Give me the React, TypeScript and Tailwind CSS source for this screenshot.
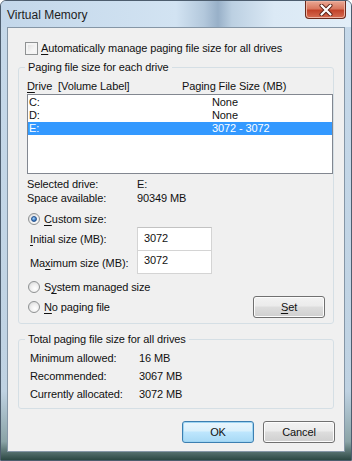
import React from "react";

const Radio = ({ checked = false }: { checked?: boolean }) => (
  <span className="relative flex h-[12px] w-[12px] shrink-0 items-center justify-center rounded-full border border-[#8f9293] bg-[radial-gradient(circle_at_60%_65%,#ffffff_0%,#f0f0f0_45%,#cfd0d1_100%)]">
    {checked && (
      <span className="h-[6px] w-[6px] rounded-full border border-[#23508c] bg-[radial-gradient(circle_at_40%_35%,#a8d4f7_0%,#3d7cc4_60%,#1f4d8c_100%)]" />
    )}
  </span>
);

const Btn = ({ children, primary = false, className = "" }: { children: React.ReactNode; primary?: boolean; className?: string }) => (
  <button
    className={
      "flex h-[22px] w-[72px] items-center justify-center rounded-[3px] border " +
      (primary
        ? "border-[#3c7fb1] bg-[linear-gradient(180deg,#eaf6fd_0%,#d9f0fc_45%,#bee6fd_50%,#a7d9f5_100%)] shadow-[inset_0_0_0_1px_#9ed5f3] "
        : "border-[#707070] bg-[linear-gradient(180deg,#f2f2f2_0%,#ebebeb_45%,#dddddd_50%,#cfcfcf_100%)] shadow-[inset_0_0_0_1px_#fcfcfc] ") +
      className
    }
  >
    {children}
  </button>
);

export default function App() {
  return (
    <div className="flex h-[461px] w-[352px] flex-col overflow-hidden rounded-t-[6px] border border-[#4d5d6e] bg-[linear-gradient(180deg,#c6d9ea_0%,#bfd2e2_85%,#8aa3a6_96%,#2c4843_100%)] font-['Liberation_Sans',Arial,sans-serif] text-[11px] leading-[14px] tracking-[-0.1px] text-[#111]">
      {/* title bar */}
      <div className="flex h-[26px] shrink-0 items-start justify-between bg-[linear-gradient(90deg,#c3d7ea_0%,#d2e3f2_50%,#b3c8dc_58%,#98b0c8_62%,#bcd0e2_66%,#dbe9f5_78%,#e2eef8_100%)] pl-[6px] pr-[5px]">
        <span className="mt-[7px] text-[12px] tracking-normal text-[#1d1d1d]">Virtual Memory</span>
        <div className="flex h-[18px] w-[41px] items-center justify-center rounded-b-[4px] border border-t-0 border-[#6b2a1c] bg-[linear-gradient(180deg,#eaa894_0%,#d9785f_45%,#c2432a_55%,#d66d52_100%)] shadow-[inset_0_0_0_1px_#eeb3a2]">
          <svg width="14" height="12" viewBox="0 0 14 12">
            <path d="M2.5 1.5 L11.5 10.5 M11.5 1.5 L2.5 10.5" stroke="#5a2116" strokeWidth="4" strokeLinecap="round" />
            <path d="M2.5 1.5 L11.5 10.5 M11.5 1.5 L2.5 10.5" stroke="#ffffff" strokeWidth="2.2" strokeLinecap="round" />
          </svg>
        </div>
      </div>

      {/* client */}
      <div className="mx-[6px] mb-[8px] flex flex-1 flex-col border border-[#8596a6] bg-[#f0f0f0]">
        <div className="ml-[17px] mt-[12px] flex h-[16px] items-center gap-[3px]">
          <span className="h-[13px] w-[13px] shrink-0 border border-[#8f9293] bg-[linear-gradient(135deg,#dadada_0%,#f4f4f4_60%,#ffffff_100%)] shadow-[inset_0_0_0_2px_#f4f4f4]" />
          <span>
            <u className="underline-offset-2">A</u>utomatically manage paging file size for all drives
          </span>
        </div>

        {/* group 1 */}
        <fieldset className="ml-[10px] mt-[4px] w-[316px] rounded-[3px] border border-[#d5dfe5] pb-[5px]">
          <legend className="ml-[6px] px-[3px]">Paging file size for each drive</legend>
          <div className="mt-[5px] flex h-[14px] pl-[8px]">
            <span className="w-[155px]">
              <u className="underline-offset-2">D</u>rive&nbsp; [Volume Label]
            </span>
            <span>Paging File Size (MB)</span>
          </div>
          <div className="ml-[8px] mt-[1px] h-[80px] w-[306px] border border-[#828790] bg-white pt-[1px]">
            {[
              ["C:", "None", false],
              ["D:", "None", false],
              ["E:", "3072 - 3072", true],
            ].map(([d, v, sel]) => (
              <div key={d as string} className={"flex h-[13px] items-center pl-[1px] leading-[13px] " + (sel ? "bg-[#3399ff] text-white" : "")}>
                <span className="w-[183px]">{d}</span>
                <span>{v}</span>
              </div>
            ))}
          </div>

          <div className="mt-[3px] pl-[8px]">
            <div className="flex h-[14px]">
              <span className="w-[110px]">Selected drive:</span>
              <span>E:</span>
            </div>
            <div className="flex h-[14px]">
              <span className="w-[110px]">Space available:</span>
              <span>90349 MB</span>
            </div>
          </div>

          <div className="ml-[9px] mt-[6px] flex h-[16px] items-center gap-[4px]">
            <Radio checked />
            <span>
              <u className="underline-offset-2">C</u>ustom size:
            </span>
          </div>
          <div className="flex h-[24px] items-center pl-[11px]">
            <span className="w-[107px]">
              <u className="underline-offset-2">I</u>nitial size (MB):
            </span>
            <div className="flex h-[24px] w-[75px] items-start border border-[#d4d4d4] border-t-[#c2c2c2] bg-white pl-[6px] pt-[3px]">3072</div>
          </div>
          <div className="flex h-[23px] items-center pl-[11px]">
            <span className="w-[107px]">
              Ma<u className="underline-offset-2">x</u>imum size (MB):
            </span>
            <div className="flex h-[23px] w-[75px] items-start border border-t-0 border-[#d4d4d4] bg-white pl-[6px] pt-[2px]">3072</div>
          </div>
          <div className="ml-[9px] mt-[5px] flex h-[16px] items-center gap-[4px]">
            <Radio />
            <span>
              S<u className="underline-offset-2">y</u>stem managed size
            </span>
          </div>
          <div className="mt-[1px] flex h-[22px] items-center justify-between pr-[8px]">
            <div className="ml-[9px] flex items-center gap-[4px]">
              <Radio />
              <span>
                <u className="underline-offset-2">N</u>o paging file
              </span>
            </div>
            <Btn>
              <u className="underline-offset-2">S</u>et
            </Btn>
          </div>
        </fieldset>

        {/* group 2 */}
        <fieldset className="ml-[10px] mt-[8px] w-[316px] rounded-[3px] border border-[#d5dfe5] pb-[5px]">
          <legend className="ml-[6px] px-[3px]">Total paging file size for all drives</legend>
          <div className="mt-[3px] pl-[11px]">
            {[
              ["Minimum allowed:", "16 MB"],
              ["Recommended:", "3067 MB"],
              ["Currently allocated:", "3072 MB"],
            ].map(([l, v]) => (
              <div key={l} className="flex h-[18px] items-center">
                <span className="w-[109px]">{l}</span>
                <span>{v}</span>
              </div>
            ))}
          </div>
        </fieldset>

        <div className="mr-[9px] mt-[12px] flex justify-end gap-[9px]">
          <Btn primary>OK</Btn>
          <Btn>Cancel</Btn>
        </div>
      </div>
    </div>
  );
}
